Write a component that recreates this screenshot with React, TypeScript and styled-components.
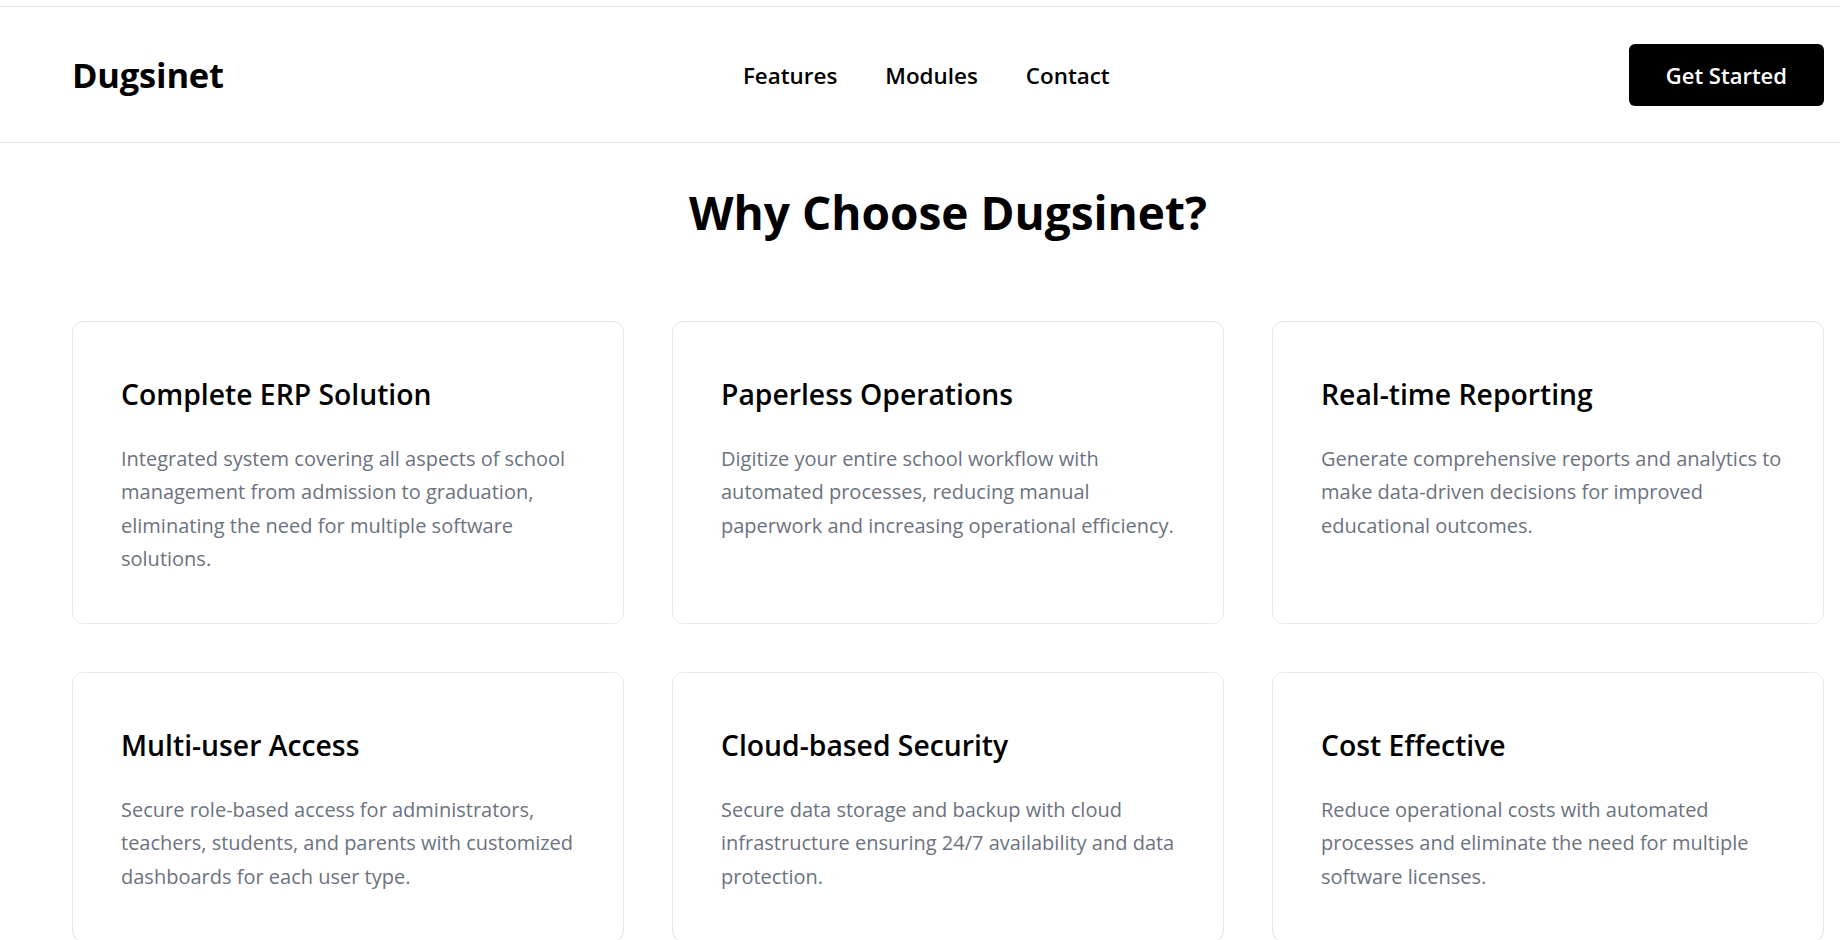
import React from "react";
import styled, { createGlobalStyle } from "styled-components";

const GlobalStyle = createGlobalStyle`
  html, body {
    margin: 0;
    padding: 0;
    background: #ffffff;
  }
  body {
    font-family: "Open Sans", "Noto Sans", Arial, sans-serif;
    color: #000000;
    -webkit-font-smoothing: antialiased;
  }
  * { box-sizing: border-box; }
`;

const Page = styled.div`
  width: 100%;
  min-height: 100vh;
  background: #ffffff;
`;

const Header = styled.header`
  margin-top: 6px;
  height: 137px;
  border-top: 1px solid #e5e7eb;
  border-bottom: 1px solid #e5e7eb;
  display: flex;
  align-items: center;
  justify-content: space-between;
  padding: 0 16px 0 72px;
`;

const Logo = styled.div`
  font-size: 34.5px;
  font-weight: 700;
  letter-spacing: -0.2px;
  color: #000;
`;

const Nav = styled.nav`
  display: flex;
  align-items: center;
  gap: 48px;
`;

const NavLink = styled.a`
  font-size: 22.4px;
  font-weight: 600;
  color: #000;
  text-decoration: none;
  line-height: 32px;
  padding-top: 2px;
  cursor: pointer;
`;

const Button = styled.button`
  font-family: inherit;
  background: #000;
  color: #fff;
  border: none;
  border-radius: 6px;
  font-size: 22px;
  font-weight: 600;
  line-height: 30px;
  padding: 16px 37px;
  cursor: pointer;
`;

const Section = styled.section`
  padding: 42px 16px 0 72px;
`;

const Heading = styled.h2`
  margin: 0 0 82px;
  text-align: center;
  font-size: 46px;
  font-weight: 700;
  line-height: 54px;
  color: #000;
`;

const Grid = styled.div`
  display: grid;
  grid-template-columns: repeat(3, 1fr);
  gap: 48px;
`;

const Card = styled.div`
  border: 1px solid #e5e7eb;
  border-radius: 11px;
  padding: 48px 34px 48px 48px;
  background: #fff;
`;

const CardTitle = styled.h3`
  margin: 0;
  font-size: 28.3px;
  font-weight: 600;
  line-height: 48px;
  color: #000;
`;

const CardText = styled.p`
  margin: 24px 0 0;
  font-size: 20px;
  font-weight: 400;
  line-height: 33.3px;
  color: #6b7280;
`;

const features = [
  {
    title: "Complete ERP Solution",
    text: "Integrated system covering all aspects of school management from admission to graduation, eliminating the need for multiple software solutions.",
  },
  {
    title: "Paperless Operations",
    text: "Digitize your entire school workflow with automated processes, reducing manual paperwork and increasing operational efficiency.",
  },
  {
    title: "Real-time Reporting",
    text: "Generate comprehensive reports and analytics to make data-driven decisions for improved educational outcomes.",
  },
  {
    title: "Multi-user Access",
    text: "Secure role-based access for administrators, teachers, students, and parents with customized dashboards for each user type.",
  },
  {
    title: "Cloud-based Security",
    text: "Secure data storage and backup with cloud infrastructure ensuring 24/7 availability and data protection.",
  },
  {
    title: "Cost Effective",
    text: "Reduce operational costs with automated processes and eliminate the need for multiple software licenses.",
  },
];

export default function App() {
  return (
    <Page>
      <GlobalStyle />
      <Header>
        <Logo>Dugsinet</Logo>
        <Nav>
          <NavLink>Features</NavLink>
          <NavLink>Modules</NavLink>
          <NavLink>Contact</NavLink>
        </Nav>
        <Button>Get Started</Button>
      </Header>
      <Section>
        <Heading>Why Choose Dugsinet?</Heading>
        <Grid>
          {features.map((f) => (
            <Card key={f.title}>
              <CardTitle>{f.title}</CardTitle>
              <CardText>{f.text}</CardText>
            </Card>
          ))}
        </Grid>
      </Section>
    </Page>
  );
}
